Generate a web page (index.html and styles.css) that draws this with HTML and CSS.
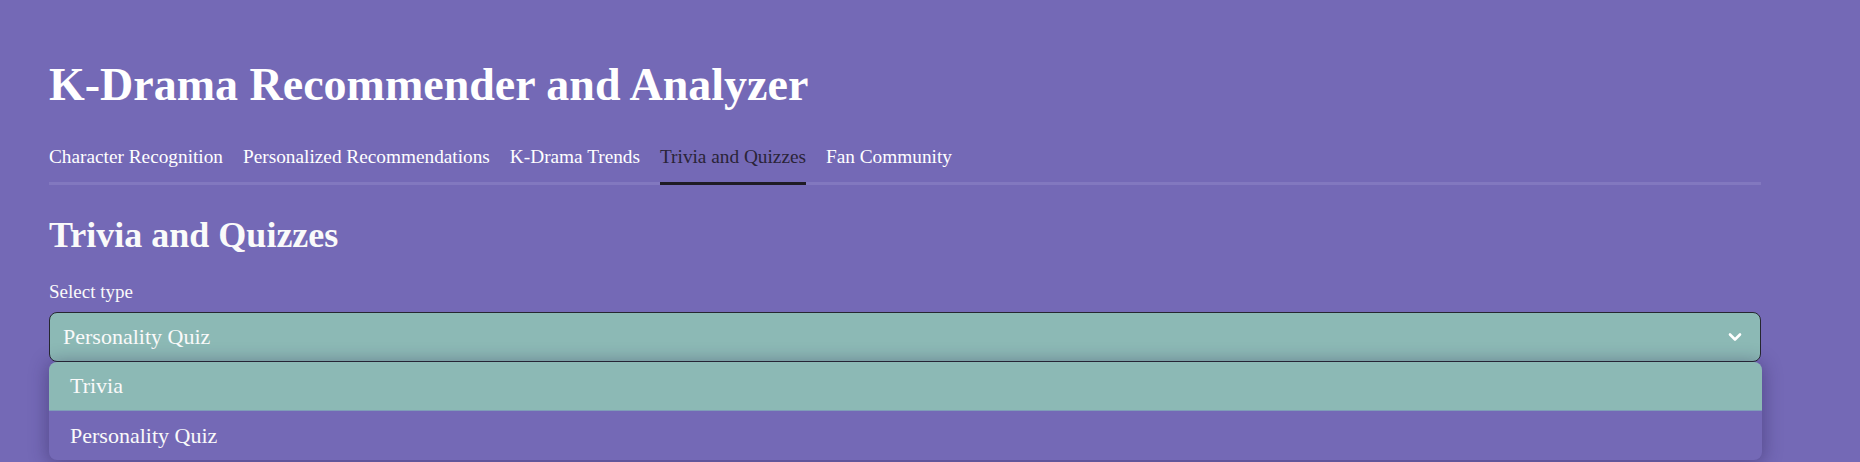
FILE: index.html
```html
<!DOCTYPE html>
<html lang="en">
<head>
<meta charset="utf-8">
<title>K-Drama Recommender and Analyzer</title>
<link rel="stylesheet" href="styles.css">
</head>
<body>
<div class="app">
  <main class="main">
    <h1 class="title">K-Drama Recommender and Analyzer</h1>
    <nav class="tabs">
      <div class="tab">Character Recognition</div>
      <div class="tab">Personalized Recommendations</div>
      <div class="tab">K-Drama Trends</div>
      <div class="tab active">Trivia and Quizzes</div>
      <div class="tab">Fan Community</div>
    </nav>
    <section class="panel">
      <h3 class="subheader">Trivia and Quizzes</h3>
      <div class="field">
        <label class="label">Select type</label>
        <div class="select-wrap">
          <div class="select">
            <span class="select-value">Personality Quiz</span>
            <svg class="chevron" width="16" height="16" viewBox="0 0 16 16" aria-hidden="true">
              <path d="M3 5.5 L8 10.5 L13 5.5" fill="none" stroke="#ffffff" stroke-width="2.6" stroke-linecap="round" stroke-linejoin="round"/>
            </svg>
          </div>
          <ul class="menu">
            <li class="option highlighted">Trivia</li>
            <li class="option">Personality Quiz</li>
          </ul>
        </div>
      </div>
    </section>
  </main>
</div>
</body>
</html>
```

FILE: styles.css
```css
* { box-sizing: border-box; }
html, body { margin: 0; padding: 0; }
body {
  background: #7469b6;
  font-family: "Liberation Serif", "DejaVu Serif", serif;
  color: #fafafa;
}
.app {
  min-height: 462px;
  background: #7469b6;
}
.main {
  width: 1712px;
  margin-left: 49px;
  padding-top: 59px;
}
.title {
  margin: 0;
  font-size: 46px;
  line-height: 52px;
  font-weight: 700;
  color: #ffffff;
}
.tabs {
  display: flex;
  gap: 20px;
  margin-top: 34px;
  border-bottom: 3px solid #8278bf;
}
.tab {
  font-size: 19.3px;
  line-height: 24px;
  padding-bottom: 13px;
  margin-bottom: -3px;
  border-bottom: 3px solid transparent;
  color: #ffffff;
}
.tab.active {
  color: #2a2438;
  border-bottom-color: #1f1b24;
}
.panel { padding-top: 28px; }
.subheader {
  margin: 0;
  font-size: 36px;
  line-height: 44px;
  font-weight: 700;
}
.field { margin-top: 24px; }
.label {
  display: block;
  font-size: 19px;
  line-height: 22px;
  margin-bottom: 9px;
}
.select-wrap { position: relative; }
.select {
  height: 50px;
  border: 1px solid #262730;
  border-radius: 8px;
  background: #8cb9b5;
  display: flex;
  align-items: center;
  justify-content: space-between;
  padding: 0 17px 0 13px;
}
.select-value { font-size: 22px; color: #fafafa; }
.chevron { display: block; }
.menu {
  position: absolute;
  top: 50px;
  left: 0;
  right: -1px;
  margin: 0;
  padding: 0;
  list-style: none;
  border-radius: 8px;
  overflow: hidden;
  background: #7469b6;
  box-shadow: 0 2px 18px 2px rgba(40, 30, 80, 0.4);
}
.option {
  height: 49px;
  display: flex;
  align-items: center;
  padding-left: 21px;
  font-size: 22px;
  color: #fafafa;
}
.option.highlighted {
  background: #8cb9b5;
  border-bottom: 1px solid #7f9db8;
}
```
